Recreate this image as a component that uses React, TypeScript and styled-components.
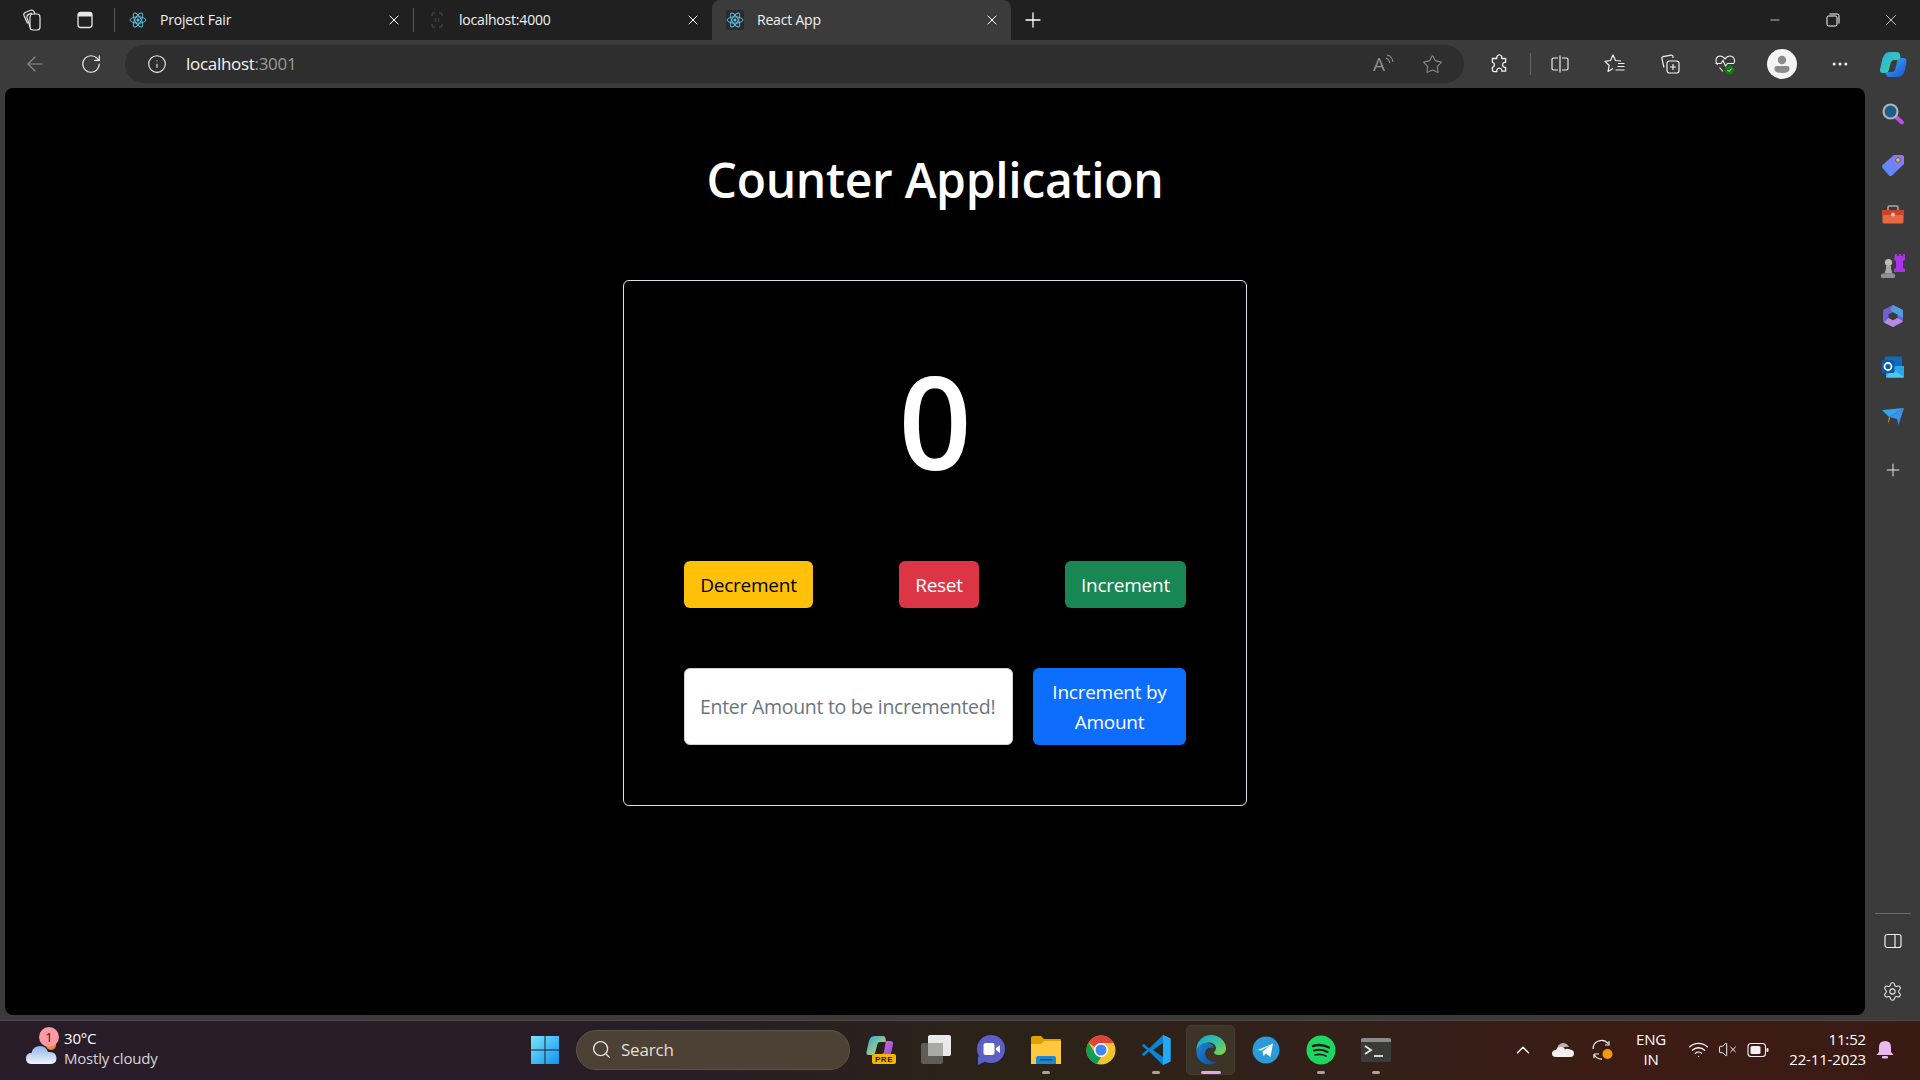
import { FC } from "react";
import styled, { createGlobalStyle } from "styled-components";
import {
    ArrowLeft, ChevronUp, Info, Minus, MoreHorizontal, Plus, RotateCw, Search, Settings, Star, VolumeX, Wifi, X,
} from "lucide-react";

const GlobalStyle = createGlobalStyle`
  html, body {
    margin: 0;
    padding: 0;
    background: #3b3b3b;
  }

  * {
    box-sizing: border-box;
  }
`

const FONT = `"Open Sans", "Noto Sans", "Liberation Sans", sans-serif`

const Page = styled.div`
  width: 1920px;
  height: 1080px;
  display: flex;
  flex-direction: column;
  overflow: hidden;
  font-family: ${FONT};
`

/* ---------- tab strip ---------- */
const TabStrip = styled.div`
  height: 40px;
  flex: none;
  display: flex;
  align-items: flex-end;
  padding-left: 10px;
  background: #202020;
  color: #fff;
`

const StripButton = styled.div<{ $gap?: number }>`
  width: 44px;
  height: 40px;
  margin-left: ${p => p.$gap ?? 0}px;
  display: flex;
  align-items: center;
  justify-content: center;
  flex: none;
`

const TabDivider = styled.div<{ $left?: number }>`
  width: 1px;
  height: 24px;
  flex: none;
  align-self: center;
  margin-left: ${p => p.$left ?? 0}px;
  background: #5a5a5a;
`

const Tab = styled.div<{ $active?: boolean }>`
  width: ${p => (p.$active ? 299 : 298)}px;
  height: ${p => (p.$active ? 40 : 36)}px;
  flex: none;
  display: flex;
  align-items: center;
  gap: 14px;
  padding: ${p => (p.$active ? "0 11px 0 15px" : "0 11px 4px 15px")};
  border-radius: 8px 8px 0 0;
  background: ${p => (p.$active ? "#3b3b3b" : "transparent")};
`

const TabLabel = styled.span`
  flex: 1;
  font-size: 14px;
  line-height: 18px;
  letter-spacing: -0.2px;
  color: #f2f2f2;
  white-space: nowrap;
`

const Favicon = styled.span<{ $tile?: boolean }>`
  width: 18px;
  height: 20px;
  margin: 0 -1px;
  display: flex;
  align-items: center;
  justify-content: center;
  flex: none;
  border-radius: 3px;
  background: ${p => (p.$tile ? "#2a2a2a" : "transparent")};
`

const WindowControls = styled.div`
  margin-left: auto;
  display: flex;
  align-self: stretch;
`

const WindowButton = styled.div`
  width: 58px;
  display: flex;
  align-items: center;
  justify-content: center;
`

/* ---------- toolbar ---------- */
const Toolbar = styled.div`
  height: 48px;
  flex: none;
  display: flex;
  align-items: center;
  padding-left: 7px;
  background: #3b3b3b;
  color: #f0f0f0;
`

const ToolSlot = styled.div<{ $w?: number; $left?: number; $dim?: boolean }>`
  width: ${p => p.$w ?? 55}px;
  height: 38px;
  flex: none;
  margin-left: ${p => p.$left ?? 0}px;
  display: flex;
  align-items: center;
  justify-content: center;
  color: ${p => (p.$dim ? "#8c8c8c" : "#f0f0f0")};
`

const AddressBar = styled.div`
  width: 1339px;
  height: 38px;
  flex: none;
  margin-left: 6px;
  padding: 0 7px 0 22px;
  display: flex;
  align-items: center;
  border-radius: 19px;
  background: #2e2e2e;
`

const Url = styled.span`
  flex: 1;
  margin: 0 0 2px 19px;
  font-size: 17px;
  letter-spacing: -0.3px;
  color: #f5f5f5;

  span {
    color: #9a9a9a;
  }
`

const ToolDivider = styled.div`
  width: 1px;
  height: 22px;
  flex: none;
  margin: 0 1px 0 4px;
  background: #6a6a6a;
`

const Avatar = styled.div`
  width: 30px;
  height: 30px;
  border-radius: 50%;
  background: #f4f4f4;
  display: flex;
  align-items: center;
  justify-content: center;
`

/* ---------- page content ---------- */
const MainRow = styled.div`
  flex: 1;
  min-height: 0;
  display: flex;
  padding-left: 5px;
  background: #3b3b3b;
`

const Viewport = styled.main`
  flex: 1;
  margin-bottom: 5px;
  display: flex;
  flex-direction: column;
  align-items: center;
  border-radius: 8px;
  background: #000;
  color: #fff;
`

const Title = styled.h1`
  margin: 63px 0 71px;
  font-size: 48px;
  line-height: 58px;
  font-weight: 600;
  letter-spacing: -0.3px;
`

const Card = styled.section`
  width: 624px;
  padding: 60px;
  display: flex;
  flex-direction: column;
  gap: 60px;
  border: 1px solid #dee2e6;
  border-radius: 6px;
`

const Count = styled.div`
  height: 160px;
  font-size: 128px;
  line-height: 159px;
  font-weight: 600;
  text-align: center;
`

const ButtonRow = styled.div`
  display: flex;
  justify-content: space-between;
`

const AmountRow = styled.div`
  display: flex;
  gap: 20px;
`

const VARIANTS = {
    warning: {bg: "#ffc107", fg: "#000"},
    danger: {bg: "#dc3545", fg: "#fff"},
    success: {bg: "#198754", fg: "#fff"},
    primary: {bg: "#0d6efd", fg: "#fff"},
}

const Btn = styled.button<{ $variant: keyof typeof VARIANTS; $w: number }>`
  width: ${p => p.$w}px;
  min-height: 47px;
  padding: 0 10px;
  border: 0;
  border-radius: 6px;
  font-family: ${FONT};
  font-size: 19px;
  line-height: 30px;
  letter-spacing: -0.25px;
  background: ${p => VARIANTS[p.$variant].bg};
  color: ${p => VARIANTS[p.$variant].fg};
`

const AmountInput = styled.input`
  width: 329px;
  height: 77px;
  padding: 0 15px;
  border: 1px solid #ced4da;
  border-radius: 6px;
  background: #fff;
  font-family: ${FONT};
  font-size: 19.5px;
  letter-spacing: -0.3px;

  &::placeholder {
    color: #6c757d;
    opacity: 1;
  }
`

/* ---------- edge sidebar ---------- */
const Sidebar = styled.aside`
  width: 55px;
  flex: none;
  display: flex;
  flex-direction: column;
  align-items: center;
  padding: 1px 0 3px;
  color: #e8e8e8;
`

const SideSlot = styled.div<{ $top?: number }>`
  width: 100%;
  height: 50.5px;
  flex: none;
  margin-top: ${p => p.$top ?? 0}px;
  display: flex;
  align-items: center;
  justify-content: center;
`

const SideDivider = styled.div`
  width: 36px;
  height: 1px;
  margin-top: auto;
  margin-bottom: 2px;
  background: #6e6e6e;
`

/* ---------- taskbar ---------- */
const Taskbar = styled.footer`
  height: 60px;
  flex: none;
  display: flex;
  align-items: center;
  padding: 0 16px 2px 0;
  border-top: 1px solid #4a4a48;
  background: linear-gradient(90deg, #281c29 0%, #281d27 35%, #2b2317 52%, #33201a 70%, #3c1c14 85%, #3a1b14 100%);
  color: #fff;
`

const Weather = styled.div`
  width: 530px;
  flex: none;
  padding-left: 25px;
  display: flex;
  align-items: center;
  gap: 6px;
`

const WeatherIcon = styled.div`
  position: relative;
  width: 33px;
  height: 32px;
  display: flex;
  align-items: flex-end;
`

const WeatherBadge = styled.span`
  position: absolute;
  left: 14px;
  top: -7px;
  width: 20px;
  height: 20px;
  border-radius: 50%;
  background: #ff99a4;
  color: #3b1a20;
  font-size: 13px;
  line-height: 20px;
  text-align: center;
`

const WeatherText = styled.div`
  margin-top: -3px;
  font-size: 15px;
  line-height: 20px;
  letter-spacing: -0.2px;

  small {
    display: block;
    font-size: 15px;
    color: #d8d4d8;
  }
`

const StartButton = styled.div`
  width: 30px;
  flex: none;
  display: flex;
`

const SearchBox = styled.div`
  width: 274px;
  height: 40px;
  flex: none;
  margin: 0 3px 0 16px;
  padding-left: 14px;
  display: flex;
  align-items: center;
  gap: 9px;
  border-radius: 20px;
  border: 1px solid #5d5448;
  background: #4c4135;
  color: #e3dfd9;
  font-size: 17px;
  letter-spacing: -0.2px;
`

const AppSlot = styled.div`
  width: 55px;
  flex: none;
  display: flex;
  justify-content: center;
`

const AppTile = styled.div<{ $active?: boolean }>`
  position: relative;
  width: 49px;
  height: 50px;
  display: flex;
  align-items: center;
  justify-content: center;
  border-radius: 5px;
  background: ${p => (p.$active ? "#3d3428" : "transparent")};
  border: 1px solid ${p => (p.$active ? "#453c30" : "transparent")};
`

const RunDot = styled.span<{ $active?: boolean }>`
  position: absolute;
  bottom: 0;
  left: 50%;
  transform: translateX(-50%);
  width: ${p => (p.$active ? 20 : 8)}px;
  height: 3px;
  border-radius: 2px;
  background: ${p => (p.$active ? "#dfa8e8" : "#a8a39b")};
`

const Tray = styled.div`
  margin-left: auto;
  display: flex;
  align-items: center;
`

const TraySlot = styled.div<{ $w: number }>`
  width: ${p => p.$w}px;
  flex: none;
  display: flex;
  align-items: center;
  justify-content: center;
`

const TwoLines = styled.div<{ $right?: boolean }>`
  width: 100%;
  margin-top: -1px;
  font-size: 15px;
  line-height: 20px;
  letter-spacing: -0.15px;
  white-space: nowrap;
  display: flex;
  flex-direction: column;
  align-items: ${p => (p.$right ? "flex-end" : "center")};
`

/* ---------- drawn icons ---------- */
const ReactLogo: FC = () => <svg width="18" height="18" viewBox="0 0 24 24" fill="none" stroke="#61c7e6" strokeWidth="1.2">
    <circle cx="12" cy="12" r="2" fill="#61c7e6" stroke="none"/>
    <ellipse cx="12" cy="12" rx="10.5" ry="4.2"/>
    <ellipse cx="12" cy="12" rx="10.5" ry="4.2" transform="rotate(60 12 12)"/>
    <ellipse cx="12" cy="12" rx="10.5" ry="4.2" transform="rotate(120 12 12)"/>
</svg>

const BracketFavicon: FC = () => <svg width="18" height="18" viewBox="0 0 18 18" fill="none" stroke="#3f3f3f" strokeWidth="1.4">
    <path d="M4 5V3.500Q4 2 5.500 2H7M11 2h1.500Q14 2 14 3.500V5M4 13v1.500Q4 16 5.500 16H7M11 16h1.500q1.500 0 1.500-1.500V13M7.500 7v4M10.500 7v4"/>
</svg>

const WorkspacesIcon: FC = () => <svg width="24" height="24" viewBox="0 0 24 24" fill="none" stroke="#e6e6e6" strokeWidth="1.2">
    <rect x="10" y="6" width="10" height="16" rx="3"/>
    <path d="M10 19 7 9.500C6.600 8 7.300 6.900 8.600 6.400L12 5"/>
    <path d="M7.500 15.500 4 7.500C3.500 6.100 4.100 5 5.300 4.500L10.500 2.300C12 1.800 13.200 2.300 14 3.500L15 6"/>
</svg>

const VerticalTabsIcon: FC = () => <svg width="20" height="20" viewBox="0 0 20 20" fill="none">
    <rect x="3" y="2.500" width="14" height="15" rx="2.400" stroke="#e6e6e6" strokeWidth="1.300"/>
    <path d="M3 5q0-2.500 2.400-2.500h9.200Q17 2.500 17 5v1.500H3z" fill="#e6e6e6"/>
</svg>

const ReadAloudIcon: FC = () => <svg width="28" height="28" viewBox="0 0 28 28" fill="none" stroke="#8f8f8f" strokeWidth="1.100">
    <text x="5" y="21" fontFamily="Open Sans, sans-serif" fontSize="19" fill="#8f8f8f" stroke="none">A</text>
    <path d="M18 8q3 1 4 5M19 5q5 1 6 7"/>
</svg>

const PuzzleIcon: FC = () => <svg width="22" height="22" viewBox="0 0 20 20" fill="none" stroke="#f0f0f0" strokeWidth="1.200" strokeLinejoin="round">
    <path d="M8 3.500a2.300 2.300 0 0 1 4.500 0V5H16v3.500h-1a2.300 2.300 0 0 0 0 4.500h1v3.500h-3.500V15.500a2.300 2.300 0 0 0-4.500 0V17H5.500a1.500 1.500 0 0 1-1.500-1.500V13a2.300 2.300 0 0 0 0-4.500V5h4z"/>
</svg>

const SplitIcon: FC = () => <svg width="20" height="20" viewBox="0 0 20 20" fill="none" stroke="#f0f0f0" strokeWidth="1.200">
    <path d="M8 4H3.500A1.500 1.500 0 0 0 2 5.500v9A1.500 1.500 0 0 0 3.500 16H8M12 4h4.500A1.500 1.500 0 0 1 18 5.500v9a1.500 1.500 0 0 1-1.500 1.500H12M10 1.500v17"/>
</svg>

const FavoritesIcon: FC = () => <svg width="22" height="22" viewBox="0 0 22 22" fill="none" stroke="#f0f0f0" strokeWidth="1.200" strokeLinejoin="round">
    <path d="M17 8 11.500 7.500 9 2 6.500 7.500 1 8.300 5.200 12.500 4 18.500 9 15.500"/>
    <path d="M14 10.500h6.500M13.500 13.500h7M11.500 17h9"/>
</svg>

const CollectionsIcon: FC = () => <svg width="22" height="22" viewBox="0 0 22 22" fill="none" stroke="#f0f0f0" strokeWidth="1.200">
    <rect x="8" y="8" width="12" height="12" rx="2.500"/>
    <path d="M14 5V3.500a1.500 1.500 0 0 0-1.800-1.400L4 3.700a1.500 1.500 0 0 0-1.100 1.800L5 14.500M14 11v6M11 14h6"/>
</svg>

const HealthIcon: FC = () => <svg width="24" height="24" viewBox="0 0 24 24" fill="none">
    <path d="M4.500 13C1.500 9 3 4 7 4c2.500 0 4 1.500 5 3 1-1.500 2.500-3 5-3 3.500 0 5.500 3.500 4 7" stroke="#f0f0f0" strokeWidth="1.100"/>
    <path d="M2.500 11.500H8l2-3 2.500 5.500 2-2.500H21M6.500 15.500l3.500 4" stroke="#f0f0f0" strokeWidth="1.100"/>
    <circle cx="16.500" cy="18" r="4.500" fill="#107c10"/>
    <path d="m14.500 18 1.500 1.500 2.500-2.800" stroke="#cfeccf" strokeWidth="1"/>
</svg>

const PersonIcon: FC = () => <svg width="22" height="22" viewBox="0 0 22 22" fill="#8a8a8a">
    <circle cx="11" cy="7" r="4.200"/>
    <path d="M3.500 15q0-2 2-2h11q2 0 2 2v1q0 4-7.500 4t-7.500-4z"/>
</svg>

const CopilotLogo: FC<{ size?: number }> = ({size = 30}) => <svg width={size} height={size} viewBox="0 0 30 30">
    <defs>
        <linearGradient id="cp-a" x1="0" y1="0" x2="1" y2="1">
            <stop offset="0" stopColor="#2aa9e8"/>
            <stop offset="0.6" stopColor="#37c8b4"/>
            <stop offset="1" stopColor="#9ae07a"/>
        </linearGradient>
        <linearGradient id="cp-b" x1="0" y1="0" x2="1" y2="1">
            <stop offset="0" stopColor="#36b6f5"/>
            <stop offset="1" stopColor="#1d4fd8"/>
        </linearGradient>
    </defs>
    <path d="M11 3h8q2.500 0 3 2.500l.7 5.500H16q-2.500 0-3.200 2.500L10.500 22q-.7 2-3 2H5q-3.500 0-3-3.500l1.500-7Q5.500 3 11 3z" fill="url(#cp-a)"/>
    <path d="M23 9h2.500q3.500 0 3 3.500l-1.500 8Q25.500 28 19 28h-8q-2.500 0-3-2.500l-.5-2.500H14q2.500 0 3.200-2.500L19.500 11q.7-2 3.500-2z" fill="url(#cp-b)"/>
</svg>

const SearchOrb: FC = () => <svg width="24" height="24" viewBox="0 0 24 24">
    <path d="m14.500 14.500 6.500 6" stroke="#c04ee6" strokeWidth="4" strokeLinecap="round"/>
    <circle cx="9.500" cy="9.500" r="7" fill="#205c88" stroke="#a7b4bb" strokeWidth="2.200"/>
</svg>

const TagIcon: FC = () => <svg width="24" height="24" viewBox="0 0 24 24">
    <defs>
        <linearGradient id="tag-a" x1="0" y1="1" x2="1" y2="0">
            <stop offset="0" stopColor="#4f8dfb"/>
            <stop offset="1" stopColor="#8f7af2"/>
        </linearGradient>
    </defs>
    <path d="M13 2h7.500Q23 2 23 4.500V11L11 22.500q-1.500 1-3 0L1.500 15q-1-1.500 0-3z" fill="url(#tag-a)"/>
    <circle cx="17" cy="7" r="2.300" fill="#f5c518" stroke="#3b3b7a" strokeWidth="0.800"/>
</svg>

const ToolboxIcon: FC = () => <svg width="24" height="24" viewBox="0 0 24 24">
    <path d="M7 7V4.500Q7 3 8.500 3h7Q17 3 17 4.500V7" fill="none" stroke="#a8a8a8" strokeWidth="1.600"/>
    <path d="M1 7h22v5H1z" fill="#c8452a"/>
    <path d="M1.500 12h21v7q0 1.500-1.500 1.500H3Q1.500 20.500 1.500 19z" fill="#e8693f"/>
    <circle cx="12" cy="11.500" r="2" fill="#c9c9c9"/>
</svg>

const ChessIcon: FC = () => <svg width="26" height="26" viewBox="0 0 26 26">
    <path d="M15 1h2v2h2V1h2v2h2V1h2v6l-2 1v7l2 1v3H14v-3l2-1V8l-2-1z" fill="#a936e6"/>
    <circle cx="8.500" cy="9.500" r="3.600" fill="#bdbdbd"/>
    <path d="M6 13h5v2.500l1.500 5h-8L6 15.500z" fill="#a8a8a8"/>
    <rect x="1" y="20.500" width="14" height="4.500" rx="1.500" fill="#8f8f8f"/>
</svg>

const M365Icon: FC = () => <svg width="24" height="24" viewBox="0 0 24 24">
    <path fillRule="evenodd" d="M12 1l9 4.500q1 .5 1 2v9q0 1.500-1 2L12 23l-9-4.500q-1-.5-1-2v-9q0-1.500 1-2zM12 8l-4.500 2.500v3.500L12 16.500l4.500-2.500v-3.500z" fill="#7060d0"/>
    <path d="M12 1l9 4.500q1 .5 1 2V14l-5.500-3.500L12 8 9.500 6z" fill="#4f9fe0"/>
    <path d="M3 18.500 7.500 14l4.500 2.500 4.500-2.500 5 3q-.2.900-.9 1.300L12 23z" fill="#b88be2"/>
</svg>

const OutlookIcon: FC = () => <svg width="24" height="24" viewBox="0 0 24 24">
    <rect x="4" y="1.500" width="17" height="12" rx="1" fill="#0f6cbd"/>
    <path d="M5 11h18v11q0 1-1 1H6q-1 0-1-1z" fill="#28a8ea"/>
    <path d="M11 14l12 8H5z" fill="#50c6f5"/>
    <rect x="0.500" y="5" width="13" height="13" rx="1.500" fill="#0a5aa8"/>
    <circle cx="7" cy="11.500" r="3.500" fill="none" stroke="#fff" strokeWidth="1.800"/>
</svg>

const DropIcon: FC = () => <svg width="24" height="24" viewBox="0 0 24 24">
    <path d="M1 5 23 3 8 12z" fill="#2ea7f0"/>
    <path d="M1 5 8 12l-1 7 2-6z" fill="#ffb900"/>
    <path d="M23 3 8 12l8 2 1.500 6z" fill="#3d8fe8"/>
</svg>

const PanelIcon: FC = () => <svg width="20" height="20" viewBox="0 0 20 20" fill="none" stroke="#f0f0f0" strokeWidth="1.200">
    <rect x="2" y="3.500" width="16" height="13" rx="2.200"/>
    <path d="M12 3.500v13"/>
</svg>

const CloudSun: FC = () => <svg width="33" height="28" viewBox="0 0 33 28">
    <defs>
        <linearGradient id="cloud-a" x1="0" y1="0" x2="0" y2="1">
            <stop offset="0" stopColor="#8fb6ea"/>
            <stop offset="1" stopColor="#f0f4fc"/>
        </linearGradient>
    </defs>
    <circle cx="26" cy="7" r="5" fill="#f08a24"/>
    <path d="M7 26q-6 0-6-5.500T6.500 15Q8 8 15 8q6 0 8 6 8-1 8.500 6 0 6-6.500 6z" fill="url(#cloud-a)"/>
</svg>

const WindowsLogo: FC = () => <svg width="30" height="30" viewBox="0 0 30 30">
    <defs>
        <linearGradient id="win-a" x1="0" y1="0" x2="1" y2="1">
            <stop offset="0" stopColor="#7ae4fb"/>
            <stop offset="1" stopColor="#0f94f0"/>
        </linearGradient>
    </defs>
    <path d="M1 1h13.500v13.500H1zM15.500 1H29v13.500H15.500zM1 15.500h13.500V29H1zM15.500 15.500H29V29H15.500z" fill="url(#win-a)"/>
</svg>

const CopilotPre: FC = () => <svg width="32" height="32" viewBox="0 0 32 32">
    <defs>
        <linearGradient id="cpre-a" x1="0" y1="0" x2="1" y2="1">
            <stop offset="0" stopColor="#2aa9e8"/>
            <stop offset="1" stopColor="#e6dd4a"/>
        </linearGradient>
        <linearGradient id="cpre-b" x1="0" y1="0" x2="1" y2="1">
            <stop offset="0" stopColor="#f06cc0"/>
            <stop offset="1" stopColor="#7a4fe6"/>
        </linearGradient>
    </defs>
    <path d="M9 2h9q2 0 2.500 2l.5 4h-6q-2 0-2.500 2L10 19q-.5 2-3 2H3.500Q1 21 1.500 18l2-9Q5 2 9 2z" fill="url(#cpre-a)"/>
    <path d="M22 7h3q3.500 0 3 3l-1.500 8q-1 5-6 5h-8l1-3h3q2 0 2.500-2L20.500 9q.2-2 1.500-2z" fill="url(#cpre-b)"/>
    <rect x="7" y="20" width="24" height="10" rx="2" fill="#f7b500"/>
    <text x="19" y="28" textAnchor="middle" fontFamily="Liberation Sans, sans-serif" fontWeight="700" fontSize="8" letterSpacing="0.600" fill="#2b1c00">PRE</text>
</svg>

const TaskViewIcon: FC = () => <svg width="32" height="32" viewBox="0 0 32 32">
    <rect x="1" y="9" width="22" height="21" rx="2" fill="#5f5d59"/>
    <rect x="8" y="1" width="23" height="21" rx="2" fill="#e9e9e9"/>
    <rect x="8" y="9" width="15" height="13" fill="#a9a9a7"/>
</svg>

const MeetIcon: FC = () => <svg width="30" height="32" viewBox="0 0 30 32">
    <circle cx="15" cy="15" r="14" fill="#5b5fc7"/>
    <path d="M2 22v9l8-4z" fill="#5b5fc7"/>
    <rect x="7.500" y="9" width="11" height="12" rx="2" fill="#fff"/>
    <path d="m20 14 4-3v8l-4-3z" fill="#fff"/>
</svg>

const FolderIcon: FC = () => <svg width="32" height="30" viewBox="0 0 32 30">
    <path d="M1 3q0-2 2-2h8l3 3h16q1 0 1 1v4H1z" fill="#e0a100"/>
    <path d="M1 6h30v23H1z" fill="#ffc83d"/>
    <path d="M1 6h13l-3 3H1z" fill="#e0a100"/>
    <path d="M6 29v-6q0-2 2-2h16q2 0 2 2v6z" fill="#1f86d0"/>
    <rect x="10" y="24" width="12" height="1.500" fill="#0b4f85"/>
</svg>

const ChromeIcon: FC = () => <svg width="30" height="30" viewBox="0 0 30 30">
    <circle cx="15" cy="15" r="14.500" fill="#f1c232"/>
    <path d="M15 .5A14.500 14.500 0 0 1 27.600 8H15a7 7 0 0 0-6.300 4L2.600 7.500A14.500 14.500 0 0 1 15 .5z" fill="#db4437"/>
    <path d="M2.600 7.500 9 18.500a7 7 0 0 0 6 3.500L11 29A14.500 14.500 0 0 1 2.600 7.500z" fill="#0f9d58"/>
    <circle cx="15" cy="15" r="7" fill="#fff"/>
    <circle cx="15" cy="15" r="5.500" fill="#4285f4"/>
</svg>

const VSCodeIcon: FC = () => <svg width="30" height="32" viewBox="0 0 30 32">
    <path d="M22 1 29.500 4.500v23L22 31 8 17.500 3 22 .5 20.500 6 16 .5 11.500 3 10l5 4.500z" fill="#0a84d6"/>
    <path d="M22 1 29.500 4.500v23L22 31z" fill="#23a9f2"/>
    <path d="M22 9 12 16l10 7z" fill="#2a241a"/>
</svg>

const EdgeIcon: FC = () => <svg width="30" height="32" viewBox="0 0 30 32">
    <defs>
        <linearGradient id="edge-a" x1="0" y1="0" x2="1" y2="0.700">
            <stop offset="0" stopColor="#1ba0d8"/>
            <stop offset="0.600" stopColor="#35c1a0"/>
            <stop offset="1" stopColor="#7ad14f"/>
        </linearGradient>
        <linearGradient id="edge-b" x1="0" y1="0" x2="1" y2="1">
            <stop offset="0" stopColor="#1a86d8"/>
            <stop offset="1" stopColor="#0c4da2"/>
        </linearGradient>
    </defs>
    <path d="M15 1c9 0 15 6.500 15 13.500 0 4-3 6.500-7 6.500-3 0-5-1-5-2.500 0-1 2-1.500 2-4.500 0-3-3-5.500-7-5.500C7 8.500 2 12 .5 17 0 8 6 1 15 1z" fill="url(#edge-a)"/>
    <path d="M.5 17c1-5 5.500-8 10-8 4 0 7.500 2 7.500 5-4-1.500-9 .5-9 5.500 0 5 5 9.500 12 8.500-2 1.500-5 2.500-7 2.500C6 30.500 0 25 .5 17z" fill="url(#edge-b)"/>
</svg>

const TelegramIcon: FC = () => <svg width="28" height="28" viewBox="0 0 28 28">
    <circle cx="14" cy="14" r="13.500" fill="#2a9bd8"/>
    <path d="M5.500 14 21 7.500 18.500 21l-4.500-3.500-2.500 2.500-1-4.500 8-6.500-9.500 5.500z" fill="#fff"/>
</svg>

const SpotifyIcon: FC = () => <svg width="30" height="30" viewBox="0 0 30 30" fill="none" stroke="#14201a" strokeLinecap="round">
    <circle cx="15" cy="15" r="14.500" fill="#1ed760" stroke="none"/>
    <path d="M7 11q8-2.500 16 1.500" strokeWidth="2.400"/>
    <path d="M8 15.500q7-2 13.500 1.500" strokeWidth="2"/>
    <path d="M9 20q6-1.500 11 1" strokeWidth="1.700"/>
</svg>

const TerminalIcon: FC = () => <svg width="30" height="26" viewBox="0 0 30 26" fill="none">
    <rect width="30" height="24" y="1" rx="1.500" fill="#3a3a38"/>
    <path d="M0 2.500Q0 1 1.500 1h27Q30 1 30 2.500V5H0z" fill="#8b8b88"/>
    <path d="m4 9 6 4-6 4" stroke="#e6e6e6" strokeWidth="1.800"/>
    <path d="M13 19h9" stroke="#e6e6e6" strokeWidth="1.800"/>
</svg>

const OneDriveIcon: FC = () => <svg width="22" height="16" viewBox="0 0 22 16">
    <path d="M5 8q0-6 6-7 4 0 6 4-6-1-7 3-4 0-5 0z" fill="#b8b4b2"/>
    <path d="M4 15q-4 0-4-3.500Q0 8 4 8q1-3 5-3 3 0 4.500 2.500Q15 6 18 7.500q4 .5 4 4T18 15z" fill="#f2f2f2"/>
</svg>

const SyncIcon: FC = () => <svg width="24" height="24" viewBox="0 0 24 24" fill="none" stroke="#f0f0f0" strokeWidth="1.200">
    <path d="M2 11A8.500 8.500 0 0 1 17 5.500M14 7h4V3M3 16h5M3 16v4M3.500 17A8 8 0 0 0 11 21"/>
    <circle cx="16.500" cy="16" r="5" fill="#f59a0c" stroke="none"/>
</svg>

const BatteryIcon: FC = () => <svg width="22" height="16" viewBox="0 0 22 16" fill="none">
    <rect x="1" y="1.500" width="17.500" height="13" rx="3" stroke="#f0f0f0" strokeWidth="1.100"/>
    <rect x="3.500" y="4" width="10" height="8" rx="1.500" fill="#f0f0f0"/>
    <rect x="19.500" y="6" width="2" height="4" rx="1" fill="#f0f0f0"/>
</svg>

const BellIcon: FC = () => <svg width="18" height="20" viewBox="0 0 18 20" fill="#ecb6ef">
    <path d="M9 1q6 0 6 6v5l2.500 3H.5L3 12V7q0-6 6-6z"/>
    <rect x="6" y="16" width="6" height="2.500" rx="1.200"/>
</svg>

export default function App() {
    return <>
        <GlobalStyle/>
        <Page>
            <TabStrip>
                <StripButton><WorkspacesIcon/></StripButton>
                <StripButton $gap={9}><VerticalTabsIcon/></StripButton>
                <TabDivider $left={7}/>
                <Tab>
                    <Favicon><ReactLogo/></Favicon>
                    <TabLabel>Project Fair</TabLabel>
                    <X size={16} strokeWidth={1.5}/>
                </Tab>
                <TabDivider/>
                <Tab>
                    <Favicon><BracketFavicon/></Favicon>
                    <TabLabel>localhost:4000</TabLabel>
                    <X size={16} strokeWidth={1.5}/>
                </Tab>
                <Tab $active>
                    <Favicon $tile><ReactLogo/></Favicon>
                    <TabLabel>React App</TabLabel>
                    <X size={16} strokeWidth={1.5}/>
                </Tab>
                <StripButton $gap={0}><Plus size={24} strokeWidth={1.3}/></StripButton>
                <WindowControls>
                    <WindowButton><Minus size={14} strokeWidth={1.2}/></WindowButton>
                    <WindowButton>
                        <svg width="14" height="14" viewBox="0 0 14 14" fill="none" stroke="#fff" strokeWidth="1">
                            <rect x="1" y="3" width="10" height="10" rx="1.500"/>
                            <path d="M3.500 1h8A1.500 1.500 0 0 1 13 2.500v8"/>
                        </svg>
                    </WindowButton>
                    <WindowButton><X size={18} strokeWidth={1}/></WindowButton>
                </WindowControls>
            </TabStrip>

            <Toolbar>
                <ToolSlot $w={56} $dim><ArrowLeft size={24} strokeWidth={1.1}/></ToolSlot>
                <ToolSlot $w={56}><RotateCw size={22} strokeWidth={1.3}/></ToolSlot>
                <AddressBar>
                    <Info size={20} strokeWidth={1.3} color="#f0f0f0"/>
                    <Url>localhost<span>:3001</span></Url>
                    <ToolSlot $w={50} $dim><ReadAloudIcon/></ToolSlot>
                    <ToolSlot $w={50} $dim><Star size={21} strokeWidth={1.2}/></ToolSlot>
                </AddressBar>
                <ToolSlot $left={7}><PuzzleIcon/></ToolSlot>
                <ToolDivider/>
                <ToolSlot><SplitIcon/></ToolSlot>
                <ToolSlot><FavoritesIcon/></ToolSlot>
                <ToolSlot><CollectionsIcon/></ToolSlot>
                <ToolSlot><HealthIcon/></ToolSlot>
                <ToolSlot $w={60}><Avatar><PersonIcon/></Avatar></ToolSlot>
                <ToolSlot $w={56}><MoreHorizontal size={20} strokeWidth={1.6}/></ToolSlot>
                <ToolSlot $w={50}><CopilotLogo/></ToolSlot>
            </Toolbar>

            <MainRow>
                <Viewport>
                    <Title>Counter Application</Title>
                    <Card>
                        <Count>0</Count>
                        <ButtonRow>
                            <Btn $variant="warning" $w={129}>Decrement</Btn>
                            <Btn $variant="danger" $w={80}>Reset</Btn>
                            <Btn $variant="success" $w={121}>Increment</Btn>
                        </ButtonRow>
                        <AmountRow>
                            <AmountInput placeholder="Enter Amount to be incremented!"/>
                            <Btn $variant="primary" $w={153}>Increment by Amount</Btn>
                        </AmountRow>
                    </Card>
                </Viewport>
                <Sidebar>
                    <SideSlot><SearchOrb/></SideSlot>
                    <SideSlot><TagIcon/></SideSlot>
                    <SideSlot><ToolboxIcon/></SideSlot>
                    <SideSlot><ChessIcon/></SideSlot>
                    <SideSlot><M365Icon/></SideSlot>
                    <SideSlot><OutlookIcon/></SideSlot>
                    <SideSlot><DropIcon/></SideSlot>
                    <SideSlot $top={2}><Plus size={20} strokeWidth={1.2}/></SideSlot>
                    <SideDivider/>
                    <SideSlot><PanelIcon/></SideSlot>
                    <SideSlot><Settings size={21} strokeWidth={1.2}/></SideSlot>
                </Sidebar>
            </MainRow>

            <Taskbar>
                <Weather>
                    <WeatherIcon>
                        <CloudSun/>
                        <WeatherBadge>1</WeatherBadge>
                    </WeatherIcon>
                    <WeatherText>
                        30°C
                        <small>Mostly cloudy</small>
                    </WeatherText>
                </Weather>
                <StartButton><WindowsLogo/></StartButton>
                <SearchBox>
                    <Search size={21} strokeWidth={1.6}/>
                    Search
                </SearchBox>
                <AppSlot><AppTile><CopilotPre/></AppTile></AppSlot>
                <AppSlot><AppTile><TaskViewIcon/></AppTile></AppSlot>
                <AppSlot><AppTile><MeetIcon/></AppTile></AppSlot>
                <AppSlot><AppTile><FolderIcon/><RunDot/></AppTile></AppSlot>
                <AppSlot><AppTile><ChromeIcon/></AppTile></AppSlot>
                <AppSlot><AppTile><VSCodeIcon/><RunDot/></AppTile></AppSlot>
                <AppSlot><AppTile $active><EdgeIcon/><RunDot $active/></AppTile></AppSlot>
                <AppSlot><AppTile><TelegramIcon/></AppTile></AppSlot>
                <AppSlot><AppTile><SpotifyIcon/><RunDot/></AppTile></AppSlot>
                <AppSlot><AppTile><TerminalIcon/><RunDot/></AppTile></AppSlot>
                <Tray>
                    <TraySlot $w={40}><ChevronUp size={22} strokeWidth={1.6}/></TraySlot>
                    <TraySlot $w={40}><OneDriveIcon/></TraySlot>
                    <TraySlot $w={40}><SyncIcon/></TraySlot>
                    <TraySlot $w={56}><TwoLines><span>ENG</span><span>IN</span></TwoLines></TraySlot>
                    <TraySlot $w={38}><Wifi size={21} strokeWidth={1.5}/></TraySlot>
                    <TraySlot $w={20}><VolumeX size={19} strokeWidth={1.2}/></TraySlot>
                    <TraySlot $w={42}><BatteryIcon/></TraySlot>
                    <TraySlot $w={87}><TwoLines $right><span>11:52</span><span>22-11-2023</span></TwoLines></TraySlot>
                    <TraySlot $w={38}><BellIcon/></TraySlot>
                </Tray>
            </Taskbar>
        </Page>
    </>
}
